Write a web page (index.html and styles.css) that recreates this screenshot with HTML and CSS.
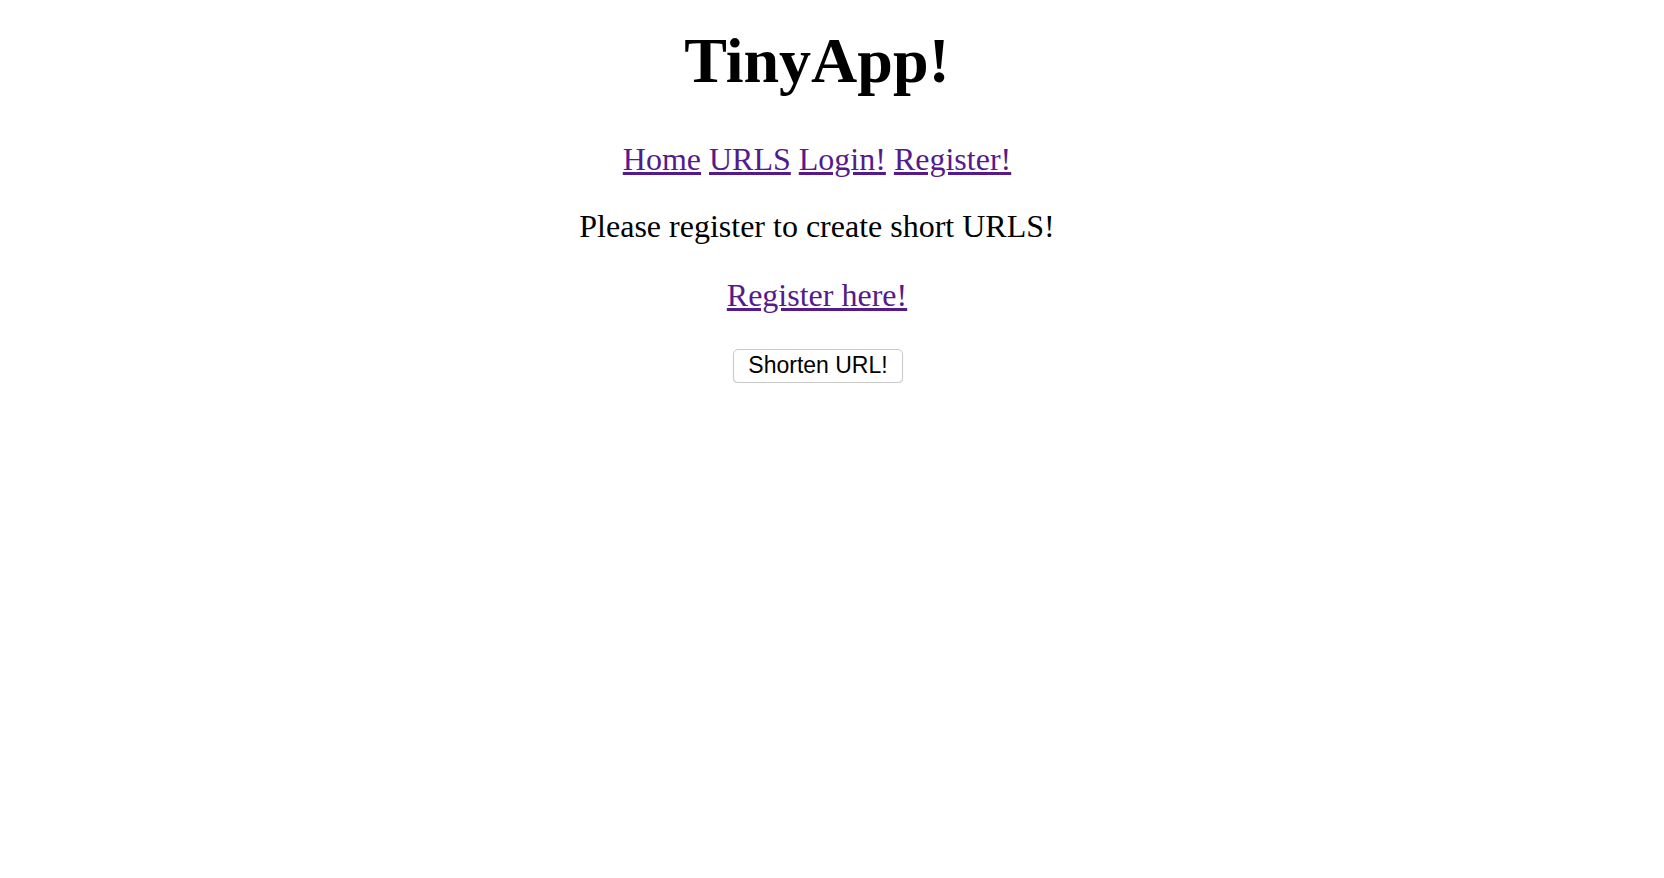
FILE: index.html
```html
<!DOCTYPE html>
<html>
<head>
<meta charset="utf-8">
<title>TinyApp!</title>
<link rel="stylesheet" href="styles.css">
</head>
<body>
<header class="header">
  <h1 class="title">TinyApp!</h1>
  <nav class="nav">
    <a href="#" class="link">Home</a>
    <a href="#" class="link">URLS</a>
    <a href="#" class="link">Login!</a>
    <a href="#" class="link">Register!</a>
  </nav>
</header>
<main class="main">
  <p class="text">Please register to create short URLS!</p>
  <p class="text"><a href="#" class="link">Register here!</a></p>
  <form class="form">
    <button type="button" class="btn">Shorten URL!</button>
  </form>
</main>
</body>
</html>
```

FILE: styles.css
```css
html, body {
  margin: 0;
  padding: 0;
  background: #ffffff;
}
body {
  font-family: "Liberation Serif", "Times New Roman", serif;
  font-size: 32px;
  color: #000;
  text-align: center;
  padding-right: 30px;
}
.header {
  padding-top: 24px;
}
.title {
  margin: 0;
  font-size: 64px;
  font-weight: bold;
  line-height: 1.149;
}
.nav {
  margin-top: 43px;
  line-height: 1.149;
}
.link {
  color: #551a8b;
  text-decoration: underline;
}
.main {
  margin-top: 31px;
}
.text {
  margin: 0 0 32px 0;
  line-height: 1.149;
}
.form {
  margin: 0;
  display: flex;
  justify-content: center;
  padding-top: 3px;
  padding-left: 2px;
}
.btn {
  font-family: "Liberation Sans", Arial, sans-serif;
  font-size: 23px;
  color: #000;
  background: #fff;
  border: 1px solid #c9c9c9;
  border-radius: 5px;
  box-shadow: 0 1px 1px rgba(0,0,0,0.12);
  width: 170px;
  height: 34px;
  padding: 0;
  line-height: 1;
}
```
